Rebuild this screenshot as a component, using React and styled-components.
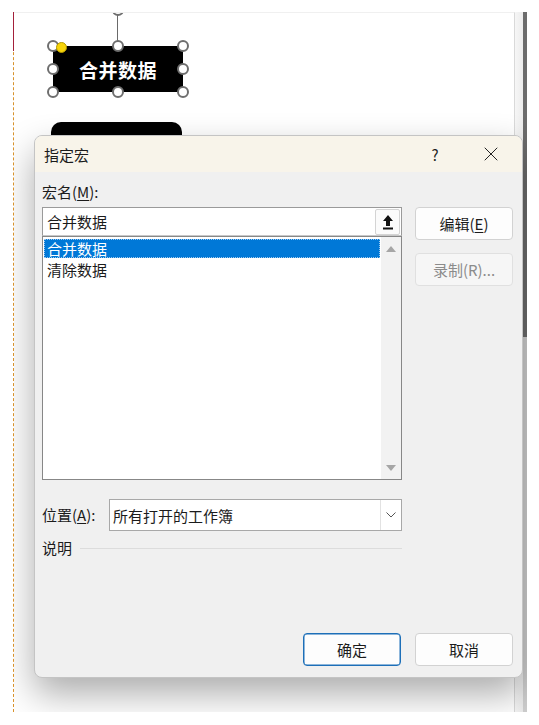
import styled, { createGlobalStyle } from "styled-components";
import { X } from "lucide-react";

const GlobalStyle = createGlobalStyle`
  html, body {
    margin: 0;
    background: #ffffff;
  }
  body {
    font-family: "Noto Sans CJK SC", "Noto Sans", sans-serif;
    color: #1b1b1b;
  }
`;

const Page = styled.div`
  width: 539px;
  height: 725px;
  padding: 12px 0 0 13px;
  box-sizing: border-box;
`;

const Canvas = styled.div`
  position: relative;
  display: flex;
  width: 514px;
  height: 700px;
`;

const Sheet = styled.div`
  position: relative;
  width: 502px;
  height: 100%;
  box-sizing: border-box;
  background: #ffffff;
  border-top: 1px solid #f0f0f0;
  border-left: 1px dashed #d8922c;
  border-right: 1px solid #d9d9d9;
  &::before {
    content: "";
    position: absolute;
    left: -1px;
    top: -1px;
    width: 1px;
    height: 39px;
    background: #a3203a;
  }
`;

const ShapeLayer = styled.div`
  position: absolute;
  inset: 0;
  overflow: hidden;
`;

const Gutter = styled.div`
  width: 8px;
  background: linear-gradient(to right, #f6f6f6, #ececec);
`;

const ScrollTrack = styled.div`
  width: 4px;
  background: linear-gradient(to bottom, #6c6c6c 0, #6c6c6c 325px, #cfcfcf 325px);
`;

/* canvas shapes */
const Shape = styled.div`
  position: absolute;
  left: ${(p) => p.$x}px;
  top: ${(p) => p.$y}px;
  width: ${(p) => p.$w}px;
  height: ${(p) => p.$h}px;
  background: #000000;
  border-radius: ${(p) => p.$r || 0}px;
  display: flex;
  align-items: center;
  justify-content: center;
  color: #ffffff;
  font-family: "Noto Sans CJK SC", sans-serif;
  font-weight: 700;
  font-size: 19px;
  letter-spacing: 0.5px;
`;

const Handle = styled.div`
  position: absolute;
  left: ${(p) => p.$x - 6}px;
  top: ${(p) => p.$y - 6}px;
  width: 8px;
  height: 8px;
  border-radius: 50%;
  background: #ffffff;
  border: 2px solid #6e6e6e;
`;

const AdjustHandle = styled.div`
  position: absolute;
  left: ${(p) => p.$x - 5}px;
  top: ${(p) => p.$y - 5}px;
  width: 9px;
  height: 9px;
  border-radius: 50%;
  background: #f7d40a;
  border: 1px solid #b59a00;
`;

const RotateLine = styled.div`
  position: absolute;
  left: 103px;
  top: 0;
  width: 1px;
  height: 30px;
  background: #6a6a6a;
`;

/* dialog */
const ModalLayer = styled.div`
  position: absolute;
  left: 1px;
  top: 0;
  right: 0;
  bottom: 0;
  overflow: hidden;
`;

const Dialog = styled.div`
  position: absolute;
  left: 20px;
  top: 123px;
  width: 489px;
  height: 543px;
  box-sizing: border-box;
  display: flex;
  flex-direction: column;
  background: #f0f0f0;
  border: 1px solid #c4c4c4;
  border-radius: 8px;
  overflow: hidden;
  box-shadow: 0 16px 36px rgba(0, 0, 0, 0.33);
  font-size: 15px;
`;

const TitleBar = styled.div`
  height: 36px;
  flex: none;
  display: flex;
  align-items: center;
  padding-left: 9px;
  background: #f8f4ea;
`;

const Title = styled.div`
  flex: 1;
`;

const HelpButton = styled.div`
  width: 30px;
  text-align: center;
  font-size: 15px;
  color: #222;
`;

const CloseButton = styled.div`
  width: 24px;
  display: flex;
  justify-content: center;
  align-items: center;
  margin: 0 19px 0 29px;
`;

const Body = styled.div`
  flex: 1;
  display: flex;
  flex-direction: column;
  padding: 10px 9px 11px 7px;
`;

const Label = styled.div`
  height: 20px;
  line-height: 20px;
  white-space: nowrap;
  & u {
    text-decoration: underline;
    text-underline-offset: 2px;
  }
`;

const MainRow = styled.div`
  display: flex;
  gap: 13px;
  margin-top: 5px;
`;

const LeftCol = styled.div`
  width: 360px;
  display: flex;
  flex-direction: column;
`;

const RightCol = styled.div`
  width: 98px;
  display: flex;
  flex-direction: column;
  gap: 13px;
`;

const TextBox = styled.div`
  height: 29px;
  box-sizing: border-box;
  display: flex;
  align-items: center;
  background: #ffffff;
  border: 1px solid #9a9a9a;
  border-bottom-color: #c8c8c8;
  padding: 0 1px 0 4px;
`;

const BoxText = styled.div`
  flex: 1;
`;

const UploadButton = styled.div`
  width: 25px;
  height: 26px;
  box-sizing: border-box;
  display: flex;
  align-items: center;
  justify-content: center;
  background: #fbfbfb;
  border: 1px solid #d4d4d4;
  border-radius: 2px;
`;

const ListBox = styled.div`
  height: 244px;
  box-sizing: border-box;
  display: flex;
  background: #ffffff;
  border: 1px solid #878787;
`;

const ListItems = styled.div`
  flex: 1;
  padding: 2px 1px 0 1px;
`;

const ListItem = styled.div`
  height: 19px;
  line-height: 19px;
  padding-left: 3px;
  box-sizing: border-box;
  margin-bottom: 2px;
  background: ${(p) => (p.$selected ? "#0078d7" : "transparent")};
  color: ${(p) => (p.$selected ? "#ffffff" : "#1b1b1b")};
  outline: ${(p) => (p.$selected ? "1px dotted #9cc8ee" : "none")};
  outline-offset: -1px;
`;

const ListScroll = styled.div`
  width: 20px;
  display: flex;
  flex-direction: column;
  justify-content: space-between;
  align-items: center;
  padding: 9px 0 8px;
  background: #f2f2f2;
`;

const Button = styled.div`
  height: 33px;
  box-sizing: border-box;
  width: 98px;
  display: flex;
  align-items: center;
  justify-content: center;
  border-radius: 4px;
  background: ${(p) => (p.$disabled ? "#f6f6f6" : "#fdfdfd")};
  color: ${(p) => (p.$disabled ? "#8b8b8b" : "#1b1b1b")};
  border: 1px solid ${(p) => (p.$primary ? "#1d6fb8" : p.$disabled ? "#e0e0e0" : "#d2d2d2")};
  box-shadow: ${(p) => (p.$primary ? "inset 0 0 0 0.5px #1d6fb8" : "none")};
  & u {
    text-decoration: underline;
    text-underline-offset: 2px;
  }
`;

const LocationRow = styled.div`
  display: flex;
  align-items: center;
  margin-top: 19px;
  width: 360px;
`;

const Select = styled.div`
  margin-left: auto;
  width: 293px;
  height: 32px;
  box-sizing: border-box;
  display: flex;
  align-items: center;
  background: #ffffff;
  border: 1px solid #a8a8a8;
  padding-left: 3px;
`;

const SelectArrow = styled.div`
  width: 20px;
  height: 100%;
  display: flex;
  align-items: center;
  justify-content: center;
  border-left: 1px solid #e2e2e2;
`;

const DescRow = styled.div`
  display: flex;
  align-items: center;
  gap: 8px;
  margin-top: 7px;
  width: 360px;
`;

const Rule = styled.div`
  flex: 1;
  height: 1px;
  background: #dcdcdc;
`;

const Footer = styled.div`
  margin-top: auto;
  display: flex;
  justify-content: flex-end;
  gap: 14px;
`;

function Triangle({ down }) {
  return (
    <svg width="10" height="6" viewBox="0 0 10 6">
      <polygon points={down ? "0,0 10,0 5,6" : "0,6 10,6 5,0"} fill="#a6a6a6" />
    </svg>
  );
}

function UploadIcon() {
  return (
    <svg width="12" height="16" viewBox="0 0 12 16">
      <polygon points="6,1 11,7 8,7 8,12 4,12 4,7 1,7" fill="#111" />
      <rect x="1" y="13.5" width="10" height="2" fill="#111" />
    </svg>
  );
}

function Chevron() {
  return (
    <svg width="10" height="6" viewBox="0 0 10 6">
      <polyline points="0.5,0.5 5,5 9.5,0.5" fill="none" stroke="#555" strokeWidth="1" />
    </svg>
  );
}

const handles = [
  [39, 33], [104, 33], [169, 33],
  [39, 56], [169, 56],
  [39, 79], [104, 79], [169, 79],
];

export default function App() {
  return (
    <Page>
      <GlobalStyle />
      <Canvas>
        <Sheet>
          <ShapeLayer>
            <RotateLine />
            <Handle $x={104} $y={-3} />
            <Shape $x={39} $y={33} $w={130} $h={46}>合并数据</Shape>
            <Shape $x={37} $y={109} $w={131} $h={60} $r={10} />
            {handles.map(([x, y], i) => (
              <Handle key={i} $x={x} $y={y} />
            ))}
            <AdjustHandle $x={47} $y={34} />
          </ShapeLayer>
        </Sheet>
        <Gutter />
        <ScrollTrack />
        <ModalLayer>
          <Dialog>
            <TitleBar>
              <Title>指定宏</Title>
              <HelpButton>?</HelpButton>
              <CloseButton>
                <X size={24} strokeWidth={1} color="#222" />
              </CloseButton>
            </TitleBar>
            <Body>
              <Label>
                宏名(<u>M</u>):
              </Label>
              <MainRow>
                <LeftCol>
                  <TextBox>
                    <BoxText>合并数据</BoxText>
                    <UploadButton>
                      <UploadIcon />
                    </UploadButton>
                  </TextBox>
                  <ListBox>
                    <ListItems>
                      <ListItem $selected>合并数据</ListItem>
                      <ListItem>清除数据</ListItem>
                    </ListItems>
                    <ListScroll>
                      <Triangle />
                      <Triangle down />
                    </ListScroll>
                  </ListBox>
                </LeftCol>
                <RightCol>
                  <Button>
                    编辑(<u>E</u>)
                  </Button>
                  <Button $disabled>录制(R)...</Button>
                </RightCol>
              </MainRow>
              <LocationRow>
                <Label>
                  位置(<u>A</u>):
                </Label>
                <Select>
                  <BoxText>所有打开的工作簿</BoxText>
                  <SelectArrow>
                    <Chevron />
                  </SelectArrow>
                </Select>
              </LocationRow>
              <DescRow>
                <Label>说明</Label>
                <Rule />
              </DescRow>
              <Footer>
                <Button $primary>确定</Button>
                <Button>取消</Button>
              </Footer>
            </Body>
          </Dialog>
        </ModalLayer>
      </Canvas>
    </Page>
  );
}
